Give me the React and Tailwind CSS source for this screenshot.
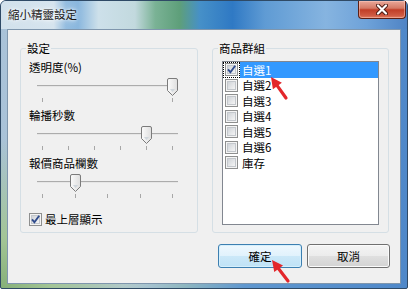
import React from 'react';

const font = "font-['Noto_Sans_CJK_TC','Noto_Sans_CJK_SC',sans-serif]";

function CheckBox({ checked }) {
  return (
    <svg width="13" height="13" viewBox="0 0 13 13" className="shrink-0">
      <defs>
        <linearGradient id="cbfill" x1="0" y1="0" x2="1" y2="1">
          <stop offset="0" stopColor="#cdd1d6" />
          <stop offset="1" stopColor="#f7f7f7" />
        </linearGradient>
      </defs>
      <rect x="0.5" y="0.5" width="12" height="12" fill="#f4f4f4" stroke="#8e8f8f" />
      <rect x="2.5" y="2.5" width="8" height="8" fill="url(#cbfill)" stroke="#c3c7cc" />
      {checked && (
        <path d="M3 6.4 L5.4 9.2 L10.2 2.8" fill="none" stroke="#2f4b8c" strokeWidth="1.9" />
      )}
    </svg>
  );
}

function Thumb() {
  return (
    <svg width="11" height="18" viewBox="0 0 11 18">
      <defs>
        <linearGradient id="thumbfill" x1="0" y1="0" x2="1" y2="0">
          <stop offset="0" stopColor="#fbfbfb" />
          <stop offset="1" stopColor="#dedede" />
        </linearGradient>
      </defs>
      <path
        d="M0.5 2 Q0.5 0.5 2 0.5 H9 Q10.5 0.5 10.5 2 V12.5 L5.5 17.5 L0.5 12.5 Z"
        fill="url(#thumbfill)"
        stroke="#7b7b7b"
      />
      <path d="M3 11 H8 L5.5 14 Z" fill="#cfd6dc" />
    </svg>
  );
}

function SliderSection({ label, ticks, value }) {
  return (
    <div className="flex flex-col">
      <div className="h-[14px] leading-[14px]">{label}</div>
      <div className="relative ml-[8px] w-[141px] h-[34px] flex flex-col pt-[11px]">
        <div className="h-[2px] border-t border-[#acacac] border-b border-b-[#e6e6e6]" />
        <div className="mt-[11px] px-[5px] flex justify-between">
          {Array.from({ length: ticks }).map((_, i) => (
            <div key={i} className="w-px h-[4px] bg-[#a7a7a7]" />
          ))}
        </div>
        <div className="absolute top-[4px]" style={{ left: Math.round(value * 130) }}>
          <Thumb />
        </div>
      </div>
    </div>
  );
}

function Arrow({ tip, tail }) {
  const dx = tip[0] - tail[0];
  const dy = tip[1] - tail[1];
  const len = Math.hypot(dx, dy);
  const ux = dx / len;
  const uy = dy / len;
  const px = -uy;
  const py = ux;
  const head = 11;
  const hw = 5.5;
  const bx = tip[0] - ux * head;
  const by = tip[1] - uy * head;
  const pts = `${tip[0]},${tip[1]} ${bx + px * hw},${by + py * hw} ${bx - px * hw},${by - py * hw}`;
  return (
    <g>
      <line x1={tail[0]} y1={tail[1]} x2={bx + ux} y2={by + uy} stroke="#e3262b" strokeWidth="3.2" strokeLinecap="round" />
      <polygon points={pts} fill="#e3262b" />
    </g>
  );
}

const items = ['自選1', '自選2', '自選3', '自選4', '自選5', '自選6', '庫存'];

export default function App() {
  return (
    <div className={`relative w-[408px] h-[289px] overflow-hidden text-[11.5px] text-black ${font}`}>
      <div className="w-full h-full flex flex-col border border-[#2f4a66] rounded-t-[6px] rounded-b-[2px] bg-[#7fa6cf] bg-[image:radial-gradient(circle_at_0%_100%,#86b078_0px,#a3c596_50px,transparent_150px),linear-gradient(to_right,#a9c2d8_0%,#b6cbdc_30%,#8fb7c0_45%,#5f97cf_60%,#4f88c9_100%)]">
        <div className="h-[28px] flex items-start justify-between rounded-t-[5px] bg-[image:linear-gradient(to_right,#d2e1ec_0%,#d6e4ee_13%,#94bde0_16%,#8ab7de_19%,#cde0ea_24%,#c2d9de_33%,#7ab295_38%,#5e9f7a_44%,#4690c8_49%,#2f79c4_57%,#5f9bd4_65%,#86b4e0_80%,#6ea2d9_90%,#4f84c5_100%)]">
          <div className="mt-[6px] ml-[7px] leading-[14px] text-[#1a1a1a] [text-shadow:0_0_6px_#fff,0_0_3px_#fff]">
            縮小精靈設定
          </div>
          <div className="mr-[1px] w-[48px] h-[18px] rounded-b-[4px] border border-t-0 border-[#5c1f14] bg-[image:linear-gradient(to_bottom,#e9a899_0%,#d47a66_42%,#c13e27_52%,#cf5a42_85%,#e27e62_100%)] shadow-[inset_0_0_0_1px_rgba(255,210,200,0.45)] flex items-center justify-center">
            <svg width="12" height="11" viewBox="0 0 12 11">
              <path d="M2 1.5 L10 9.5 M10 1.5 L2 9.5" stroke="#4a1a12" strokeWidth="4" strokeLinecap="round" />
              <path d="M2 1.5 L10 9.5 M10 1.5 L2 9.5" stroke="#ffffff" strokeWidth="2.2" strokeLinecap="round" />
            </svg>
          </div>
        </div>

        <div className="flex-1 mx-[6px] mb-[4px] border border-[#7f96ad] bg-[#f0f0f0] flex flex-col pt-[18px] pl-[12px] pr-[11px]">
          <div className="h-[185px] flex gap-[14px]">
            <div className="relative w-[178px] border border-[#d5dfe5] rounded-[3px] pt-[11px] pl-[8px] flex flex-col">
              <span className="absolute -top-[8px] left-[5px] px-[1px] bg-[#f0f0f0] leading-[14px]">設定</span>
              <SliderSection label="透明度(%)" ticks={2} value={1} />
              <SliderSection label="輪播秒數" ticks={6} value={0.8} />
              <SliderSection label="報價商品欄數" ticks={5} value={0.25} />
              <div className="mt-[8px] h-[14px] flex items-center gap-[3px]">
                <CheckBox checked />
                <span className="leading-[14px]">最上層顯示</span>
              </div>
            </div>

            <div className="relative w-[177px] border border-[#d5dfe5] rounded-[3px] pt-[12px] px-[9px] pb-[7px] flex flex-col">
              <span className="absolute -top-[8px] left-[5px] px-[1px] bg-[#f0f0f0] leading-[14px]">商品群組</span>
              <div className="flex-1 border border-[#828790] bg-white">
                {items.map((t, i) => (
                  <div
                    key={t}
                    className={`h-[15.5px] flex items-center gap-[2px] ${i === 0 ? 'bg-[#3399ff] text-white' : ''}`}
                  >
                    <div className={`h-full flex items-center px-[2px] ${i === 0 ? 'outline outline-1 outline-dotted outline-black -outline-offset-1 bg-white' : ''}`}>
                      <CheckBox checked={i === 0} />
                    </div>
                    <span className="leading-[14px]">{t}</span>
                  </div>
                ))}
              </div>
            </div>
          </div>

          <div className="mt-[11px] flex justify-end gap-[5px] -mr-[1px]">
            <button className="w-[84px] h-[24px] rounded-[3px] border border-[#3c7fb1] bg-[image:linear-gradient(to_bottom,#eef8fe_0%,#e1f2fc_48%,#cbe8f8_52%,#bfe2f6_100%)] shadow-[inset_0_0_0_1px_#d5effc] leading-[14px]">
              確定
            </button>
            <button className="w-[83px] h-[24px] rounded-[3px] border border-[#707070] bg-[image:linear-gradient(to_bottom,#f4f4f4_0%,#ececec_48%,#dfdfdf_52%,#d3d3d3_100%)] shadow-[inset_0_0_0_1px_#fbfbfb] leading-[14px]">
              取消
            </button>
          </div>
        </div>
      </div>

      <svg className="absolute inset-0 pointer-events-none" width="408" height="289" viewBox="0 0 408 289">
        <Arrow tip={[271, 77]} tail={[286, 98]} />
        <Arrow tip={[272, 260]} tail={[288, 281]} />
      </svg>
    </div>
  );
}
